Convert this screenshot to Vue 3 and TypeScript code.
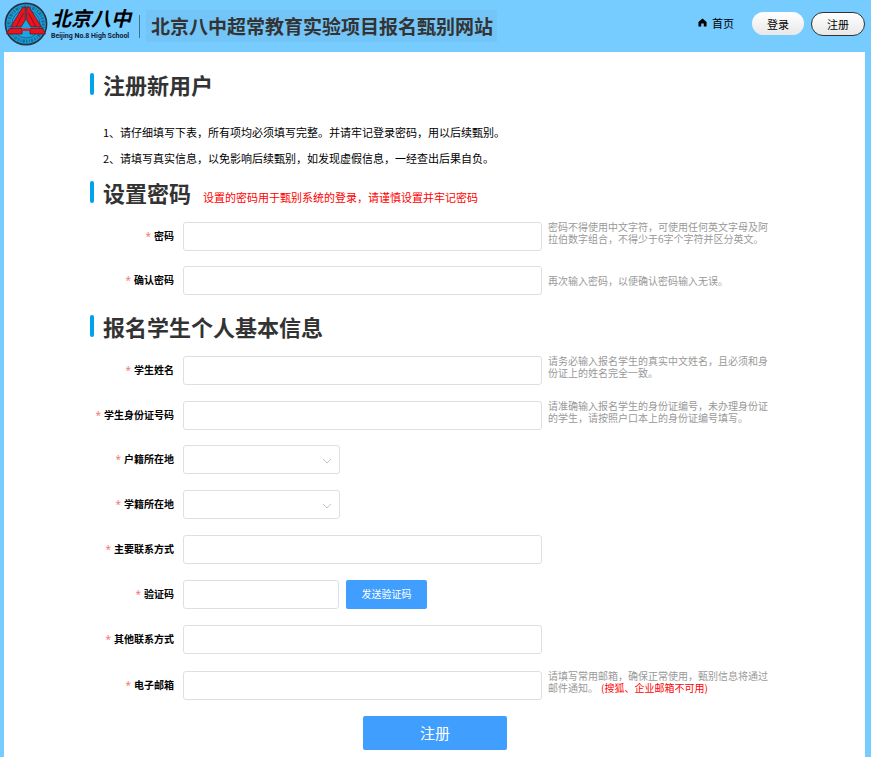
<script setup lang="ts">
import { reactive } from 'vue'

interface Field {
  id: string
  label: string
  kind: 'text' | 'password' | 'select' | 'code'
  hint?: string
  warning?: string
  tall?: boolean
}

const passwordFields: Field[] = [
  {
    id: 'password',
    label: '密码',
    kind: 'password',
    hint: '密码不得使用中文字符，可使用任何英文字母及阿拉伯数字组合，不得少于6字个字符并区分英文。',
    tall: true,
  },
  { id: 'confirm', label: '确认密码', kind: 'password', hint: '再次输入密码，以便确认密码输入无误。' },
]

const studentFields: Field[] = [
  {
    id: 'name',
    label: '学生姓名',
    kind: 'text',
    hint: '请务必输入报名学生的真实中文姓名，且必须和身份证上的姓名完全一致。',
    tall: true,
  },
  {
    id: 'idcard',
    label: '学生身份证号码',
    kind: 'text',
    hint: '请准确输入报名学生的身份证编号，未办理身份证的学生，请按照户口本上的身份证编号填写。',
    tall: true,
  },
  { id: 'household', label: '户籍所在地', kind: 'select' },
  { id: 'school', label: '学籍所在地', kind: 'select' },
  { id: 'phone', label: '主要联系方式', kind: 'text' },
  { id: 'code', label: '验证码', kind: 'code' },
  { id: 'other', label: '其他联系方式', kind: 'text' },
  {
    id: 'email',
    label: '电子邮箱',
    kind: 'text',
    hint: '请填写常用邮箱，确保正常使用，甄别信息将通过邮件通知。',
    warning: '(搜狐、企业邮箱不可用)',
    tall: true,
  },
]

const sections = [
  { title: '设置密码', note: '设置的密码用于甄别系统的登录，请谨慎设置并牢记密码', fields: passwordFields },
  { title: '报名学生个人基本信息', note: '', fields: studentFields },
]

const form = reactive<Record<string, string>>({})
</script>

<template>
  <div class="page">
    <header class="header">
      <div class="brand">
        <svg class="emblem" viewBox="0 0 44 44" aria-hidden="true">
          <circle cx="22" cy="22" r="20.600" fill="#18a0dc" stroke="#26323f" stroke-width="1.6" />
          <circle cx="22" cy="22" r="17.200" fill="none" stroke="#1d4d69" stroke-width="3.2" stroke-dasharray="1.6 1.2 2.4 1 0.9 1.3" opacity="0.6" />
          <circle cx="22" cy="22" r="14" fill="#18a6e2" stroke="#26536e" stroke-width="0.8" />
          <path d="M19 5 H21.300 V18 L17 25 H6.500 Z" fill="#f0121b" stroke="#4a2030" stroke-width="0.8" />
          <path d="M25 5 H22.700 V18 L27 25 H37.500 Z" fill="#f0121b" stroke="#4a2030" stroke-width="0.8" />
          <path d="M5.500 26.500 H18 V32 H2.500 Z" fill="#f0121b" stroke="#4a2030" stroke-width="0.8" />
          <path d="M38.500 26.500 H26 V32 H41.500 Z" fill="#f0121b" stroke="#4a2030" stroke-width="0.8" />
          <path d="M18 26.500 H26 V29 H18 Z" fill="#f0121b" />
          <path d="M19.500 11 L12 25 M24.500 11 L32 25" fill="none" stroke="#6a1a26" stroke-width="0.9" />
        </svg>
        <div class="school">
          <span class="school-cn">北京八中</span>
          <span class="school-en">Beijing No.8 High School</span>
        </div>
      </div>
      <h1 class="site-title">北京八中超常教育实验项目报名甄别网站</h1>
      <nav class="nav">
        <a class="home" href="#">
          <svg class="home-icon" viewBox="0 0 10 10" aria-hidden="true">
            <path d="M5 0.500 L9.500 4.500 V9.500 H6.400 V6 H3.600 V9.500 H0.500 V4.500 Z" fill="#000" />
          </svg>
          首页
        </a>
        <button class="pill" type="button">登录</button>
        <button class="pill pill-active" type="button">注册</button>
      </nav>
    </header>

    <main class="main">
      <form class="form" @submit.prevent>
        <h2 class="heading">注册新用户</h2>
        <div class="intro">
          <p>1、请仔细填写下表，所有项均必须填写完整。并请牢记登录密码，用以后续甄别。</p>
          <p>2、请填写真实信息，以免影响后续甄别，如发现虚假信息，一经查出后果自负。</p>
        </div>

        <section v-for="section in sections" :key="section.title" class="section">
          <h2 class="heading">
            {{ section.title }}
            <small v-if="section.note" class="note">{{ section.note }}</small>
          </h2>
          <div class="rows">
            <div v-for="field in section.fields" :key="field.id" class="row">
              <label class="label" :for="field.id"><span class="star">*</span>{{ field.label }}</label>
              <div v-if="field.kind === 'select'" class="select-box">
                <select :id="field.id" v-model="form[field.id]" class="control"></select>
                <svg class="arrow" viewBox="0 0 10 6" aria-hidden="true">
                  <path d="M1 1 L5 5 L9 1" fill="none" stroke="#c0c4cc" stroke-width="1" />
                </svg>
              </div>
              <div v-else-if="field.kind === 'code'" class="code-box">
                <input :id="field.id" v-model="form[field.id]" class="control" type="text" />
                <button class="send" type="button">发送验证码</button>
              </div>
              <input v-else :id="field.id" v-model="form[field.id]" class="control" :type="field.kind" />
              <p v-if="field.hint" class="hint" :class="{ 'hint-tall': field.tall }">
                {{ field.hint }}<span v-if="field.warning" class="warning">{{ field.warning }}</span>
              </p>
            </div>
          </div>
        </section>

        <button class="submit" type="submit">注册</button>
      </form>
    </main>
  </div>
</template>

<style>
body {
  margin: 0;
  background: #76cbff;
}
</style>

<style scoped>
.page {
  display: flex;
  flex-direction: column;
  box-sizing: border-box;
  min-height: 100vh;
  padding: 0 6px 0 4px;
  background: #76cbff;
  color: #000;
  font-family: 'Noto Sans CJK SC', 'Open Sans', sans-serif;
  font-size: 11px;
}
.header {
  display: flex;
  align-items: center;
  height: 52px;
  box-sizing: border-box;
  padding-bottom: 5px;
}
.brand {
  display: flex;
  align-items: center;
  gap: 3px;
  padding-right: 8px;
}
.emblem {
  width: 44px;
  height: 44px;
}
.school {
  display: flex;
  flex-direction: column;
  width: 80px;
}
.school-cn {
  font-size: 20px;
  font-weight: 700;
  font-style: italic;
  line-height: 24px;
  color: #000;
}
.school-en {
  font-family: Roboto, sans-serif;
  font-size: 7px;
  font-weight: 700;
  line-height: 12px;
  color: #123;
  white-space: nowrap;
}
.site-title {
  position: relative;
  margin: 5px 0 0 7px;
  padding: 0 4px 0 5px;
  background: #73c5f7;
  color: #333;
  font-size: 19px;
  font-weight: 700;
  line-height: 32px;
  white-space: nowrap;
}
.site-title::before {
  content: '';
  position: absolute;
  left: -7px;
  top: 5px;
  width: 1px;
  height: 23px;
  background: #456f8c;
}
.nav {
  display: flex;
  align-items: center;
  margin-left: auto;
}
.home {
  display: flex;
  align-items: center;
  gap: 5px;
  margin-right: 18px;
  padding-bottom: 2px;
  color: #000;
  text-decoration: none;
}
.home-icon {
  width: 9px;
  height: 9px;
}
.pill {
  height: 23px;
  width: 52px;
  padding: 0;
  border: 0;
  border-radius: 12px;
  background: linear-gradient(#fff, #e8e8e8);
  color: #000;
  font: inherit;
}
.pill-active {
  width: 54px;
  height: 24px;
  margin-left: 7px;
  border: 1px solid #333;
}
.main {
  flex: 1;
  padding: 20px 0 7px;
  background: #fff;
}
.form {
  box-sizing: border-box;
  max-width: 689px;
  margin: 0 auto;
  padding-right: 9px;
}
.heading {
  display: flex;
  align-items: baseline;
  position: relative;
  margin: 0;
  padding: 0 0 2px 13px;
  color: #333;
  font-size: 22px;
  font-weight: 700;
  line-height: 24px;
}
.heading::before {
  content: '';
  position: absolute;
  left: 0;
  top: 1px;
  width: 4px;
  height: 22px;
  border-radius: 2px;
  background: #00a2e9;
}
.note {
  margin-left: 12px;
  color: #f00;
  font-size: 11px;
  font-weight: 400;
  line-height: 12px;
}
.intro {
  margin-top: 21px;
  padding-left: 13px;
}
.intro p {
  margin: 0;
  line-height: 26px;
}
.section {
  margin-top: 9px;
}
.section + .section {
  margin-top: 19px;
}
.rows {
  display: grid;
  gap: 16px;
  margin-top: 15px;
}
.row {
  display: grid;
  grid-template-columns: 84px minmax(0, 1fr) 222px;
  align-items: center;
  height: 29px;
}
.label {
  padding-bottom: 2px;
  font-size: 10px;
  font-weight: 700;
  text-align: right;
  white-space: nowrap;
}
.star {
  margin-right: 3px;
  color: #f56c6c;
  font-family: 'Open Sans', sans-serif;
  font-weight: 400;
}
.control {
  display: block;
  box-sizing: border-box;
  width: 100%;
  height: 29px;
  padding: 0 8px;
  border: 1px solid #dcdfe6;
  border-radius: 3px;
  outline: 0;
  background: #fff;
  color: #333;
  font: inherit;
  appearance: none;
}
.row > .control,
.select-box,
.code-box {
  width: auto;
  margin: 0 6px 0 9px;
}
.select-box {
  position: relative;
  width: 157px;
}
.arrow {
  position: absolute;
  right: 8px;
  top: 13px;
  width: 10px;
  height: 6px;
  pointer-events: none;
}
.code-box {
  display: flex;
  gap: 7px;
}
.code-box .control {
  width: 156px;
}
.send {
  width: 81px;
  height: 29px;
  padding: 0 0 2px;
  border: 0;
  border-radius: 2px;
  background: #409eff;
  color: #fff;
  font: inherit;
  font-size: 10px;
}
.hint {
  margin: 0;
  color: #999;
  font-size: 10px;
  line-height: 12px;
}
.hint-tall {
  padding-bottom: 6px;
}
.warning {
  display: inline-block;
  margin-left: 3px;
  color: #f00;
}
.submit {
  display: block;
  width: 144px;
  height: 34px;
  margin: 17px auto 0 273px;
  padding: 0 0 2px;
  border: 0;
  border-radius: 2px;
  background: #409eff;
  color: #fff;
  font: inherit;
  font-size: 15px;
}
</style>
